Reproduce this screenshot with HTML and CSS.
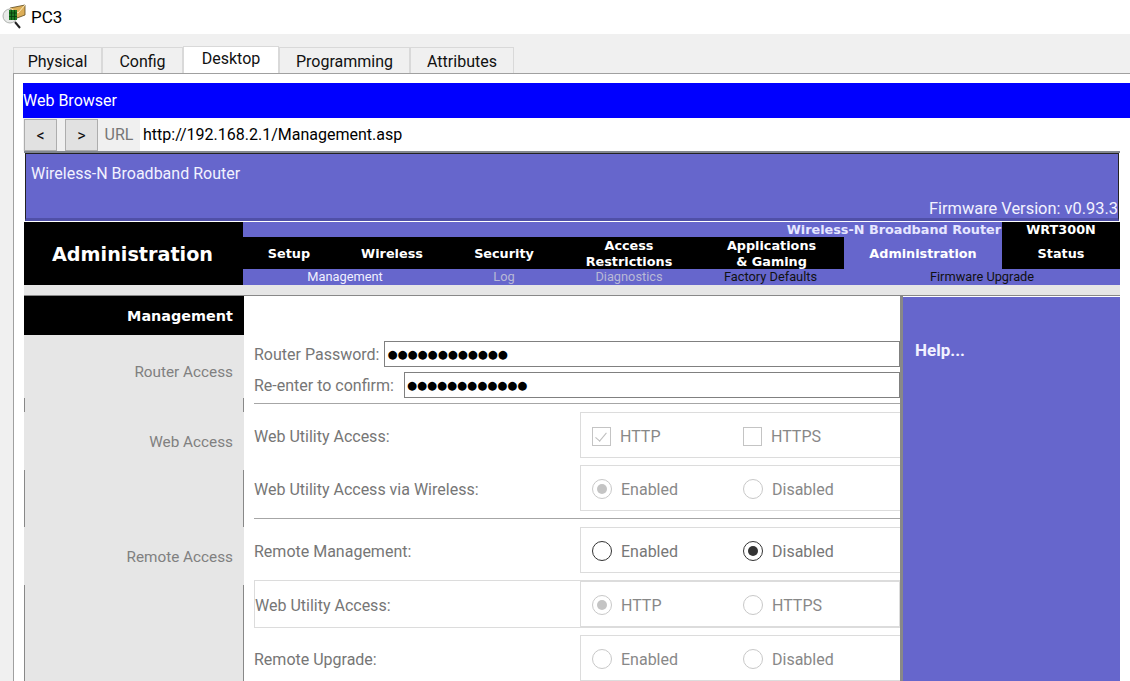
FILE: index.html
```html
<!DOCTYPE html>
<html lang="en">
<head>
    <meta charset="UTF-8">
    <meta name="viewport" content="width=device-width, initial-scale=1.0">
    <title>PC3</title>
    <link rel="stylesheet" href="styles.css">
</head>
<body>
    <header class="titlebar">
        <svg class="app-icon" width="26" height="30" viewBox="0 0 26 30">
            <circle cx="8" cy="14" r="7" fill="#e8eae8" stroke="#b0b3b0"/>
            <path d="M13 20l5 6" stroke="#222" stroke-width="2"/>
            <path d="M8 6l15-3v10l-8 3z" fill="#dcae58" stroke="#5e4a1e" stroke-width="0.8"/>
            <path d="M8 6l8 5 7-8" fill="none" stroke="#fff2c8" stroke-width="0.9"/>
            <rect x="7" y="8" width="8" height="10" fill="#1c7c24"/>
            <path d="M9.5 8v10M12.5 8v10M7 11h8M7 14.500h8" stroke="#083a0c" stroke-width="0.8"/>
        </svg>
        <span class="app-name">PC3</span>
    </header>

    <main class="window">
        <nav class="tabs">
            <a class="tab">Physical</a>
            <a class="tab">Config</a>
            <a class="tab active">Desktop</a>
            <a class="tab">Programming</a>
            <a class="tab">Attributes</a>
        </nav>

        <section class="panel">
            <div class="browser-title">Web Browser</div>
            <div class="urlbar">
                <button class="nav-btn">&lt;</button>
                <button class="nav-btn">&gt;</button>
                <span class="url-label">URL</span>
                <span class="url-value">http://192.168.2.1/Management.asp</span>
            </div>

            <div class="page">
                <div class="banner">
                    <div>Wireless-N Broadband Router</div>
                    <div class="firmware">Firmware Version: v0.93.3</div>
                </div>

                <div class="topnav">
                    <div class="section-title">Administration</div>
                    <div class="topnav-right">
                        <div class="model-row">
                            <span class="model-name">Wireless-N Broadband Router</span>
                            <span class="model-id">WRT300N</span>
                        </div>
                        <div class="menu">
                            <span class="menu-item w-setup">Setup</span>
                            <span class="menu-item w-wireless">Wireless</span>
                            <span class="menu-item w-security">Security</span>
                            <span class="menu-item w-access">Access<br>Restrictions</span>
                            <span class="menu-item w-apps">Applications<br>&amp; Gaming</span>
                            <span class="menu-item w-admin current">Administration</span>
                            <span class="menu-item w-status">Status</span>
                        </div>
                        <div class="submenu">
                            <span class="sub-item s-mgmt on">Management</span>
                            <span class="sub-item s-log off">Log</span>
                            <span class="sub-item s-diag off">Diagnostics</span>
                            <span class="sub-item s-fact">Factory Defaults</span>
                            <span class="sub-item s-firm">Firmware Upgrade</span>
                        </div>
                    </div>
                </div>

                <div class="gap-strip"></div>

                <div class="content">
                    <aside class="sidebar">
                        <div class="side-head">Management</div>
                        <div class="side-item router">Router Access</div>
                        <div class="side-edge e-short"></div>
                        <div class="side-item web">Web Access</div>
                        <div class="side-edge e-mid"></div>
                        <div class="side-item remote">Remote Access</div>
                        <div class="side-edge e-rest"></div>
                    </aside>

                    <div class="form">
                        <div class="pw-row first">
                            <label class="label">Router Password:</label>
                            <span class="pw-input">●●●●●●●●●●●●</span>
                        </div>
                        <div class="pw-row second">
                            <label class="label">Re-enter to confirm:</label>
                            <span class="pw-input">●●●●●●●●●●●●</span>
                        </div>
                        <hr class="rule first-rule">

                        <div class="row">
                            <span class="label">Web Utility Access:</span>
                            <div class="choices">
                                <span class="choice"><i class="check checked"></i>HTTP</span>
                                <span class="choice"><i class="check"></i>HTTPS</span>
                            </div>
                        </div>
                        <div class="row">
                            <span class="label">Web Utility Access via Wireless:</span>
                            <div class="choices">
                                <span class="choice"><i class="radio selected"></i>Enabled</span>
                                <span class="choice"><i class="radio"></i>Disabled</span>
                            </div>
                        </div>
                        <hr class="rule">

                        <div class="row">
                            <span class="label">Remote Management:</span>
                            <div class="choices live">
                                <span class="choice"><i class="radio"></i>Enabled</span>
                                <span class="choice"><i class="radio selected"></i>Disabled</span>
                            </div>
                        </div>
                        <div class="row boxed">
                            <span class="label">Web Utility Access:</span>
                            <div class="choices">
                                <span class="choice"><i class="radio selected"></i>HTTP</span>
                                <span class="choice"><i class="radio"></i>HTTPS</span>
                            </div>
                        </div>
                        <div class="row">
                            <span class="label">Remote Upgrade:</span>
                            <div class="choices">
                                <span class="choice"><i class="radio"></i>Enabled</span>
                                <span class="choice"><i class="radio"></i>Disabled</span>
                            </div>
                        </div>
                    </div>

                    <aside class="help">Help...</aside>
                </div>
            </div>
        </section>
    </main>
</body>
</html>
```

FILE: styles.css
```css
html, body {
    height: 681px;
    overflow: hidden;
}

body {
    margin: 0;
    width: 1130px;
    background-color: #f0f0f0;
    font-family: 'Roboto', sans-serif;
    font-size: 16px;
    color: #000;
}

/* window chrome */
.titlebar {
    height: 34px;
    background-color: #fff;
    display: flex;
    align-items: center;
    padding-left: 2px;
}

.app-icon {
    margin-right: 3px;
}

.app-name {
    font-size: 17px;
}

.window {
    padding: 12px 0 0 13px;
}

.tabs {
    display: flex;
    align-items: flex-end;
    height: 27px;
}

.tab {
    height: 25px;
    line-height: 27px;
    text-align: center;
    border: 1px solid #d9d9d9;
    border-bottom: none;
    background-color: #f0f0f0;
    color: #111;
}

.tab:nth-child(1) { width: 87px; }
.tab:nth-child(2) { width: 79px; }
.tab:nth-child(3) { width: 94px; height: 26px; line-height: 24px; background-color: #fff; }
.tab:nth-child(4) { width: 129px; }
.tab:nth-child(5) { width: 102px; }

.panel {
    border: 1px solid #a0a0a0;
    border-right: none;
    background-color: #fff;
    padding: 9px 0 0 9px;
    height: 620px;
}

.browser-title {
    height: 35px;
    line-height: 35px;
    background-color: #0000ff;
    color: #fff;
}

.urlbar {
    display: flex;
    align-items: stretch;
    height: 33px;
    background-color: #f0f0f0;
}

.nav-btn {
    width: 33px;
    height: 32px;
    margin: 1px 8px 0 1px;
    padding: 0;
    border: 1px solid #adadad;
    background-color: #e1e1e1;
    font-family: inherit;
    font-size: 16px;
    color: #111;
}

.nav-btn + .nav-btn {
    margin: 1px 0 0 0;
}

.url-label {
    width: 42px;
    text-align: center;
    line-height: 33px;
    color: #777;
}

.url-value {
    flex: 1;
    background-color: #fff;
    line-height: 33px;
    padding-left: 3px;
}

/* router page */
.page {
    width: 1096px;
    margin-left: 1px;
    border-top: 2px solid #828790;
}

.banner {
    box-sizing: border-box;
    height: 68px;
    background-color: #6666cc;
    border: 1px solid #222;
    border-bottom: 3px solid #5050a8;
    margin: 0 1px;
    color: #f2f2ff;
    padding: 10px 0 0 5px;
}

.firmware {
    margin-top: 16px;
    text-align: right;
    font-size: 16.4px;
}

.topnav {
    display: flex;
    height: 63px;
    margin-top: 1px;
}

.section-title {
    box-sizing: border-box;
    width: 219px;
    padding-right: 2px;
    background-color: #000;
    color: #fff;
    font-family: 'DejaVu Sans', sans-serif;
    font-weight: bold;
    font-size: 19.2px;
    text-align: center;
    line-height: 65px;
}

.topnav-right {
    flex: 1;
    display: flex;
    flex-direction: column;
}

.model-row {
    height: 15px;
    display: flex;
    justify-content: flex-end;
    background-color: #6666cc;
    font-family: 'DejaVu Sans', sans-serif;
    font-weight: bold;
    font-size: 12.8px;
    line-height: 15px;
    color: #e6e6ff;
}

.model-name {
    padding-right: 1px;
}

.model-id {
    width: 118px;
    text-align: center;
    background-color: #000;
    color: #fff;
}

.menu {
    height: 32px;
    display: flex;
    background-color: #000;
    font-family: 'DejaVu Sans', sans-serif;
    font-weight: bold;
    font-size: 12.8px;
    color: #fff;
}

.menu-item {
    box-sizing: border-box;
    padding-top: 1px;
    display: flex;
    align-items: center;
    justify-content: center;
    text-align: center;
    line-height: 16px;
}

.w-setup { width: 92px; }
.w-wireless { width: 114px; }
.w-security { width: 110px; }
.w-access { width: 140px; }
.w-apps { width: 145px; }
.w-admin { width: 158px; }
.w-status { flex: 1; }

.current {
    background-color: #6666cc;
}

.submenu {
    height: 16px;
    display: flex;
    background-color: #6666cc;
    font-size: 12.8px;
    line-height: 16px;
}

.sub-item {
    text-align: center;
    color: #111;
}

.sub-item.on { color: #f0f0ff; }
.sub-item.off { color: #b9b9d6; }

.s-mgmt { width: 204px; }
.s-log { width: 114px; }
.s-diag { width: 136px; }
.s-fact { width: 147px; }
.s-firm { width: 276px; }

.gap-strip {
    height: 10px;
    background-color: #e6e6e6;
    border-bottom: 1px solid #888;
}

.content {
    display: flex;
    height: 400px;
}

.sidebar {
    width: 220px;
    flex-shrink: 0;
    background-color: #e6e6e6;
    color: #808080;
    text-align: right;
    font-size: 15.3px;
}

.side-head {
    height: 39px;
    line-height: 41px;
    background-color: #000;
    color: #fff;
    font-family: 'DejaVu Sans', sans-serif;
    font-weight: bold;
    font-size: 14.4px;
    padding-right: 11px;
}

.side-item {
    box-sizing: border-box;
    padding-right: 11px;
    display: flex;
    align-items: center;
    justify-content: flex-end;
}

.router { height: 63px; padding-top: 10px; }
.web { height: 58px; padding-top: 2px; }
.remote { height: 58px; padding-top: 2px; }

/* the cell edges only show between the labelled cells */
.side-edge {
    border-left: 1px solid #888;
    border-right: 1px solid #888;
}

.e-short { height: 14px; }
.e-mid { height: 57px; }
.e-rest { height: 100px; }

.form {
    width: 656px;
    flex-shrink: 0;
    padding-left: 10px;
    box-sizing: border-box;
}

.label {
    color: #767676;
}

.pw-row {
    display: flex;
    align-items: center;
    height: 26px;
    margin-bottom: 5px;
    white-space: nowrap;
}

.pw-row.first {
    margin-top: 45px;
}

.pw-input {
    flex: 1;
    height: 24px;
    line-height: 24px;
    margin-left: 6px;
    padding-left: 2px;
    border: 1px solid #808080;
    color: #000;
    font-family: 'DejaVu Sans', sans-serif;
    font-size: 11.500px;
}

.pw-row.first .pw-input {
    margin-left: 5px;
}

.pw-row.second .pw-input {
    margin-left: 10px;
}

.rule {
    margin: 0 0 8px;
    border: none;
    border-top: 1px solid #a6a6a6;
}

.first-rule {
    margin-top: 1px;
}

.row {
    display: flex;
    align-items: center;
    height: 46px;
    margin-bottom: 7px;
}

.row .label {
    width: 326px;
    flex-shrink: 0;
    padding-top: 2px;
}

.choices {
    flex: 1;
    align-self: stretch;
    display: flex;
    border: 1px solid #dcdcdc;
    border-right: none;
    color: #888;
}

.choices.live {
    color: #777;
}

.choice {
    width: 151px;
    padding: 2px 0 0 11px;
    box-sizing: border-box;
    display: flex;
    align-items: center;
}

.check {
    width: 19px;
    height: 19px;
    margin-right: 9px;
    border: 1px solid #c4c4c4;
    box-sizing: border-box;
    position: relative;
}

.check.checked::after {
    content: "";
    position: absolute;
    left: 5px;
    top: 2px;
    width: 5px;
    height: 10px;
    border: solid #bdbdbd;
    border-width: 0 1px 1px 0;
    transform: rotate(40deg);
}

.radio {
    width: 20px;
    height: 20px;
    margin-right: 9px;
    border: 1px solid #c8c8c8;
    border-radius: 50%;
    box-sizing: border-box;
    position: relative;
}

.radio.selected::after {
    content: "";
    position: absolute;
    left: 4px;
    top: 4px;
    width: 10px;
    height: 10px;
    border-radius: 50%;
    background-color: #c4c4c4;
}

.live .radio {
    border-color: #333;
}

.live .radio.selected::after {
    background-color: #333;
}

.row.boxed {
    border: 1px solid #dcdcdc;
    box-sizing: border-box;
    height: 48px;
}

.row.boxed .label {
    width: 325px;
}

.help {
    flex: 1;
    background-color: #6666cc;
    border-left: 3px solid #888;
    box-shadow: inset 0 1px 0 #fff;
    color: #f2f2ff;
    font-weight: bold;
    font-size: 17px;
    padding: 44px 0 0 12px;
}
```
